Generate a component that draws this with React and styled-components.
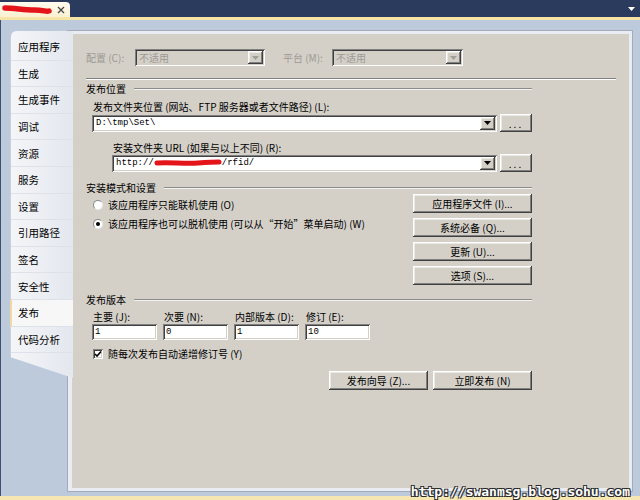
import React from 'react';
import styled, { createGlobalStyle, css } from 'styled-components';

const GlobalStyle = createGlobalStyle`
  html, body { margin: 0; padding: 0; }
  body {
    width: 640px;
    height: 500px;
    overflow: hidden;
    background: #bccadb;
    font-family: "Noto Sans CJK SC", "Noto Sans", sans-serif;
    font-size: 10px;
    color: #000;
  }
`;

const sunken = css`
  box-shadow: inset 1px 1px #808080, inset -1px -1px #ffffff,
    inset 2px 2px #404040, inset -2px -2px #d4d0c8;
`;

const raised = css`
  box-shadow: inset -1px -1px #404040, inset 1px 1px #ffffff,
    inset -2px -2px #808080, inset 2px 2px #ebe9e4;
`;

const Window = styled.div`
  position: relative;
  width: 640px;
  height: 500px;
  display: flex;
  flex-direction: column;
  background: #bccadb;
`;

const TopBar = styled.div`
  height: 17px;
  display: flex;
  align-items: flex-end;
  justify-content: space-between;
  background: #2b3b5d;
  padding-right: 5px;
`;

const DocTab = styled.div`
  width: 70px;
  height: 15px;
  box-sizing: border-box;
  display: flex;
  align-items: center;
  justify-content: space-between;
  padding: 0 5px 0 2px;
  background: linear-gradient(#fffcef, #fbf1d2);
  border-radius: 0 4px 0 0;
`;

const MenuArrow = styled.div`
  align-self: center;
  display: flex;
`;

const YellowLine = styled.div`
  height: 3px;
  background: #f5e4a6;
`;

const Body = styled.div`
  flex: 1;
  display: flex;
  border-left: 1px solid #3e4f72;
  padding: 10px 7px 4px 9px;
  min-height: 0;
`;

const SideTabs = styled.div`
  position: relative;
  z-index: 1;
  align-self: flex-start;
  width: 63px;
  height: 347px;
  margin-top: 1px;
  margin-right: -6px;
  padding-top: 3px;
  box-sizing: border-box;
  background: linear-gradient(90deg, #f4f5f8, #e3e7ee);
  border-left: 1px solid #c9d0dc;
  border-radius: 6px 0 0 0;
  clip-path: polygon(0 0, 100% 0, 100% 100%, 0 calc(100% - 21px));
`;

const TabItem = styled.div`
  height: 26.6px;
  box-sizing: border-box;
  display: flex;
  align-items: center;
  padding-left: ${p => (p.$active ? 6 : 7)}px;
  font-size: 10.5px;
  border-bottom: 1px solid #dde2ea;
  background: ${p => (p.$active ? '#f7f7f8' : 'transparent')};
  border-left: ${p => (p.$active ? '2px solid #f1d89f' : '0')};
  margin-left: ${p => (p.$active ? '-1px' : '0')};
`;

const Frame = styled.div`
  flex: 1;
  display: flex;
  border: 1px solid #a2acbd;
  background: #e9edf3;
  padding: 3px 3px 3px 4px;
`;

const Panel = styled.div`
  flex: 1;
  background: #d4d0c8;
  padding: 15px 0 0 14px;
  display: flex;
  flex-direction: column;
`;

const Row = styled.div`
  display: flex;
  align-items: center;
  margin-top: ${p => p.$mt || 0}px;
  padding-left: ${p => p.$pl || 0}px;
  gap: ${p => p.$gap || 0}px;
`;

const Label = styled.span`
  display: inline-block;
  width: ${p => (p.$w ? `${p.$w}px` : 'auto')};
  color: ${p => (p.$disabled ? '#9c9a94' : '#000')};
  line-height: 12px;
  white-space: nowrap;
`;

const Combo = styled.div`
  width: ${p => p.$w}px;
  height: 17px;
  box-sizing: border-box;
  display: flex;
  align-items: center;
  padding: 2px;
  margin-left: ${p => p.$ml || 0}px;
  background: ${p => (p.$disabled ? '#d4d0c8' : '#fff')};
  ${sunken};
`;

const ComboValue = styled.span`
  flex: 1;
  display: flex;
  align-items: center;
  padding-left: 2px;
  overflow: hidden;
  white-space: nowrap;
  color: ${p => (p.$disabled ? '#9c9a94' : '#000')};
  font-family: ${p => (p.$mono ? '"Liberation Mono", monospace' : 'inherit')};
  font-size: ${p => (p.$mono ? '9px' : '10px')};
`;

const DropButton = styled.span`
  width: 15px;
  height: 13px;
  display: flex;
  align-items: center;
  justify-content: center;
  background: #d4d0c8;
  ${raised};
`;

const Button = styled.div`
  width: ${p => p.$w}px;
  height: ${p => p.$h || 19}px;
  box-sizing: border-box;
  display: flex;
  align-items: center;
  justify-content: center;
  background: #d4d0c8;
  letter-spacing: ${p => p.$ls || 0}px;
  white-space: nowrap;
  ${raised};
`;

const Separator = styled.div`
  width: 530px;
  margin-top: ${p => p.$mt || 0}px;
  border-top: 1px solid #808080;
  border-bottom: 1px solid #ffffff;
`;

const GroupHeader = styled.div`
  width: 446px;
  height: 12px;
  display: flex;
  align-items: center;
  gap: 8px;
  margin-top: ${p => p.$mt || 0}px;
  line-height: 12px;
`;

const HeaderRule = styled.div`
  flex: 1;
  border-top: 1px solid #8c8c8c;
  border-bottom: 1px solid #f4f3f0;
`;

const ModeSection = styled.div`
  width: 446px;
  display: flex;
  justify-content: space-between;
`;

const RadioList = styled.div`
  display: flex;
  flex-direction: column;
  gap: 7px;
  padding: 5px 0 0 7px;
`;

const Option = styled.label`
  display: flex;
  align-items: center;
  gap: 5px;
  line-height: 12px;
`;

const Radio = styled.span`
  width: 10px;
  height: 10px;
  box-sizing: border-box;
  border-radius: 50%;
  background: #fff;
  border: 1px solid #8a8a8a;
  border-right-color: #e8e8e8;
  border-bottom-color: #e8e8e8;
  display: flex;
  align-items: center;
  justify-content: center;
  &::after {
    content: '';
    width: 4px;
    height: 4px;
    border-radius: 50%;
    background: ${p => (p.$checked ? '#000' : 'transparent')};
  }
`;

const ButtonColumn = styled.div`
  display: flex;
  flex-direction: column;
  gap: 5px;
`;

const VersionRow = styled.div`
  display: flex;
  gap: 6px;
  margin-top: 5px;
  padding-left: 6px;
`;

const VersionField = styled.div`
  display: flex;
  flex-direction: column;
  gap: 1px;
`;

const TextBox = styled.div`
  width: 65px;
  height: 16px;
  box-sizing: border-box;
  display: flex;
  align-items: center;
  padding: 2px 3px;
  background: #fff;
  font-family: "Liberation Mono", monospace;
  font-size: 9px;
  ${sunken};
`;

const CheckBox = styled.span`
  width: 10px;
  height: 10px;
  box-sizing: border-box;
  background: #fff;
  display: flex;
  align-items: center;
  justify-content: center;
  ${sunken};
`;

const ActionRow = styled.div`
  width: 446px;
  display: flex;
  justify-content: flex-end;
  gap: 5px;
  margin-top: 11px;
`;

const BottomLine = styled.div`
  height: 4px;
  background: #f6e7b2;
`;

const Watermark = styled.div`
  position: absolute;
  right: 10px;
  bottom: 1px;
  font-family: "DejaVu Sans Mono", monospace;
  font-weight: bold;
  font-size: 13px;
  line-height: 15px;
  color: #fff;
  text-shadow: 1px 1px 0 #2a2a2a, -1px -1px 0 #2a2a2a, 1px -1px 0 #2a2a2a,
    -1px 1px 0 #2a2a2a;
`;

const Arrow = ({ color = '#000' }) => (
  <svg width="7" height="4" viewBox="0 0 7 4">
    <path d="M0 0 H7 L3.5 4 Z" fill={color} />
  </svg>
);

const Scribble = ({ w, h, d, sw }) => (
  <svg width={w} height={h} viewBox={`0 0 ${w} ${h}`}>
    <path d={d} stroke="#e3151a" strokeWidth={sw} fill="none" strokeLinecap="round" />
  </svg>
);

const tabs = ['应用程序', '生成', '生成事件', '调试', '资源', '服务', '设置', '引用路径', '签名', '安全性', '发布', '代码分析'];

const versions = [
  ['主要 (J):', '1'],
  ['次要 (N):', '0'],
  ['内部版本 (D):', '1'],
  ['修订 (E):', '10'],
];

export default function App() {
  return (
    <>
      <GlobalStyle />
      <Window>
        <TopBar>
          <DocTab>
            <Scribble w={50} h={11} sw={5.5} d="M3 4 C 12 4, 22 6, 32 6 S 44 8, 47 7" />
            <svg width="8" height="8" viewBox="0 0 8 8">
              <path d="M1 1 L7 7 M7 1 L1 7" stroke="#4a4a4a" strokeWidth="1.4" />
            </svg>
          </DocTab>
          <MenuArrow>
            <svg width="7" height="4" viewBox="0 0 7 4">
              <path d="M0 0 H7 L3.5 4 Z" fill="#fff" />
            </svg>
          </MenuArrow>
        </TopBar>
        <YellowLine />
        <Body>
          <SideTabs>
            {tabs.map(t => (
              <TabItem key={t} $active={t === '发布'}>{t}</TabItem>
            ))}
          </SideTabs>
          <Frame>
            <Panel>
              <Row>
                <Label $w={49} $disabled>配置 (C):</Label>
                <Combo $w={130} $disabled>
                  <ComboValue $disabled>不适用</ComboValue>
                  <DropButton><Arrow color="#a09e98" /></DropButton>
                </Combo>
                <Label $w={49} $disabled style={{ marginLeft: 18 }}>平台 (M):</Label>
                <Combo $w={131} $disabled>
                  <ComboValue $disabled>不适用</ComboValue>
                  <DropButton><Arrow color="#a09e98" /></DropButton>
                </Combo>
              </Row>
              <Separator $mt={12} />
              <GroupHeader $mt={3}>发布位置<HeaderRule /></GroupHeader>
              <Row $mt={6} $pl={7}>
                <Label>发布文件夹位置 (网站、FTP 服务器或者文件路径) (L):</Label>
              </Row>
              <Row $mt={1} $gap={3}>
                <Combo $w={405} $ml={6}>
                  <ComboValue $mono>D:\tmp\Set\</ComboValue>
                  <DropButton><Arrow /></DropButton>
                </Combo>
                <Button $w={32} $h={18} $ls={2}>...</Button>
              </Row>
              <Row $mt={10} $pl={27}>
                <Label>安装文件夹 URL (如果与以上不同) (R):</Label>
              </Row>
              <Row $gap={3}>
                <Combo $w={385} $ml={26}>
                  <ComboValue $mono>
                    http://
                    <Scribble w={68} h={10} sw={5} d="M3 5 C 16 4, 30 6, 44 5 S 60 4, 65 4" />
                    /rfid/
                  </ComboValue>
                  <DropButton><Arrow /></DropButton>
                </Combo>
                <Button $w={32} $h={18} $ls={2}>...</Button>
              </Row>
              <GroupHeader $mt={10}>安装模式和设置<HeaderRule /></GroupHeader>
              <ModeSection>
                <RadioList>
                  <Option><Radio />该应用程序只能联机使用 (O)</Option>
                  <Option><Radio $checked />该应用程序也可以脱机使用 (可以从“开始”菜单启动) (W)</Option>
                </RadioList>
                <ButtonColumn>
                  <Button $w={119}>应用程序文件 (I)...</Button>
                  <Button $w={119}>系统必备 (Q)...</Button>
                  <Button $w={119}>更新 (U)...</Button>
                  <Button $w={119}>选项 (S)...</Button>
                </ButtonColumn>
              </ModeSection>
              <GroupHeader $mt={9}>发布版本<HeaderRule /></GroupHeader>
              <VersionRow>
                {versions.map(([label, value]) => (
                  <VersionField key={label}>
                    <Label style={{ paddingLeft: 1 }}>{label}</Label>
                    <TextBox>{value}</TextBox>
                  </VersionField>
                ))}
              </VersionRow>
              <Row $mt={8} $pl={7}>
                <Option>
                  <CheckBox>
                    <svg width="8" height="8" viewBox="0 0 8 8">
                      <path d="M1 4 L3 6 L7 1.5" stroke="#000" strokeWidth="1.6" fill="none" />
                    </svg>
                  </CheckBox>
                  随每次发布自动递增修订号 (Y)
                </Option>
              </Row>
              <ActionRow>
                <Button $w={99}>发布向导 (Z)...</Button>
                <Button $w={99}>立即发布 (N)</Button>
              </ActionRow>
            </Panel>
          </Frame>
        </Body>
        <BottomLine />
        <Watermark>http://swanmsg.blog.sohu.com</Watermark>
      </Window>
    </>
  );
}
